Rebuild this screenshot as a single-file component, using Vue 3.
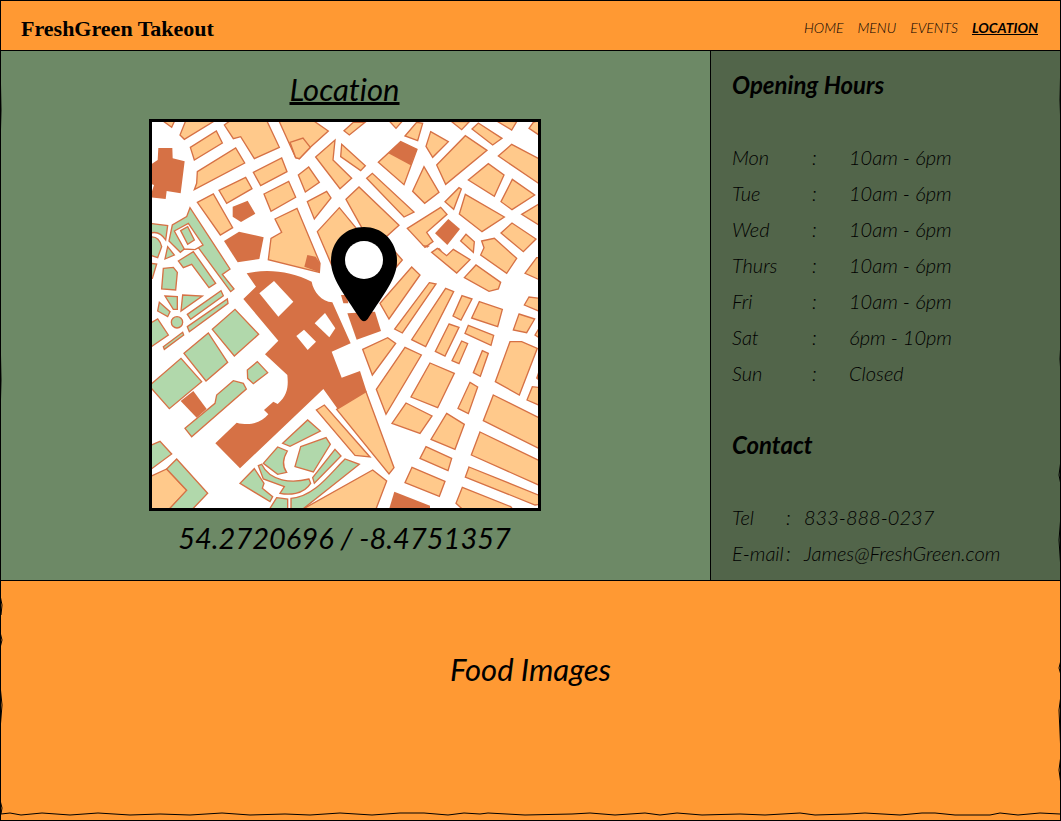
<script setup>
const nav = [
  { label: 'Home', href: '#home' },
  { label: 'Menu', href: '#menu' },
  { label: 'Events', href: '#events' },
  { label: 'Location', href: '#location', current: true },
]
const hours = [
  ['Mon', '10am - 6pm'],
  ['Tue', '10am - 6pm'],
  ['Wed', '10am - 6pm'],
  ['Thurs', '10am - 6pm'],
  ['Fri', '10am - 6pm'],
  ['Sat', '6pm - 10pm'],
  ['Sun', 'Closed'],
]
// City blocks, grouped by map tile
const tiles = [
  {
    at: 'translate(0 0)',
    blocks: [
      '50,15 80,37 90,15', '105,60 118,73 205,20 205,10 125,10', '136,97 214,48 232,84 148,135',
      '157,170 272,99 299,144 148,224 155,205', '238,30 265,10 362,10 403,97 328,131 287,65 265,71',
      '403,20 403,10 495,10 550,48 496,97 463,131 452,128', '435,82 474,69 496,97 463,131 452,128',
      '512,126 570,75 564,135 620,190 585,221', '590,88 661,152 647,167 587,125',
      '325,172 410,129 426,170 347,212', '357,237 431,199 452,247 378,289',
      '460,180 491,156 523,202 481,231', '487,260 545,229 558,249 508,312',
      '222,226 302,187 321,221 245,265', '157,262 205,237 263,338 226,360',
      '390,312 456,280 525,445 523,472 370,434 378,370 410,352', '517,350 583,278 700,420 640,520 560,450',
    ],
    red: [
      '40,99 82,99 83,130 119,139 107,235 65,228 62,252 15,247 27,210 15,205 15,150 38,135',
      '263,275 308,257 331,296 288,321 263,305', '237,378 282,350 356,367 343,432 278,442',
      '487,420 512,425 525,445 523,472 478,455',
    ],
    green: [],
  },
  {
    at: 'translate(585 0)',
    blocks: [
      '12,47 40,22 75,22 28,60', '145,15 190,15 168,40', '195,63 230,22 248,25 233,77',
      '272,50 325,80 278,127 258,94', '335,20 388,20 365,44', '396,42 415,24 486,70 458,90',
      '470,18 530,20 515,45', '567,40 580,22 600,15 600,62', '475,123 515,88 600,133 600,208',
      '290,150 376,62 441,106 317,208', '115,142 182,80 231,103 192,209', '385,195 445,146 492,180 463,244',
      '517,193 584,240 516,284 483,260', '545,298 600,265 600,332', '218,229 252,155 297,232 254,265',
      '80,190 97,175 222,291 192,306', '18,253 57,216 177,331 100,400', '315,260 357,218 364,222 341,283',
      '376,238 493,306 426,350 358,297', '202,340 302,277 321,298 260,352 279,380 255,397',
      '362,378 378,358 403,380 400,412', '483,354 516,324 588,372 550,410',
      '425,378 463,370 530,430 500,475 422,420 432,398',
    ],
    red: ['182,80 231,103 212,151 145,115', '285,355 325,312 360,342 322,390', '288,405 297,398 306,407', '245,390 262,398 270,392'],
    green: [],
  },
  {
    at: 'translate(0 390)',
    blocks: [],
    red: ['588,150 605,150 610,175 595,175', '607,205 690,200 708,258 635,284'],
    green: [
      '15,55 35,57 22,100 15,100', '55,70 85,67 97,82 92,135 50,132',
      '100,48 145,20 212,115 192,128 140,58 115,68', '60,153 97,155 97,193 85,193',
      '113,150 172,153 108,198', '43,172 75,200 68,215 38,198', '127,208 228,137 235,152 137,223',
      '127,245 247,162 249,175 133,260', '55,305 113,262 116,270 58,313', '15,235 38,222 70,270 15,308',
      '202,253 270,193 341,268 268,333', '117,325 190,264 248,352 183,408',
      '15,420 108,340 170,410 73,491 15,425', '307,375 337,350 368,383 325,416 308,400',
      '68,5 88,30 60,42',
    ],
  },
  {
    at: 'translate(585 390)',
    blocks: [
      '275,22 292,10 320,32 340,13 390,44 350,84', '373,98 408,60 482,112 475,132 447,139',
      '555,85 590,38 600,38 600,105', '215,66 240,90 147,222 120,175', '165,20 187,45 170,65',
      '268,113 288,117 187,264 164,252', '317,130 341,140 257,305 215,284', '366,152 396,162 363,225 339,213',
      '418,170 487,193 473,245 395,219', '553,180 567,156 600,160 600,200', '537,207 584,222 560,263 520,255',
      '385,241 461,271 453,301 375,265', '327,237 357,247 315,333 286,319', '365,288 383,296 357,356 336,347',
      '427,317 445,325 421,394 400,383', '585,270 600,245 600,280', '68,313 143,278 167,295 97,390',
      '195,307 244,330 138,508 109,433', '270,354 343,385 293,488 213,456',
      '510,290 545,290 592,310 538,450 466,410',
    ],
    red: ['588,400 600,365 600,410'],
    green: [],
  },
  {
    at: 'translate(0 780)',
    blocks: ['15,305 65,282 125,346 75,400 15,405'],
    red: ['145,48 185,102 155,128 107,78'],
    green: [
      '120,160 210,85 215,60 265,17 295,25 304,42 140,185', '15,212 45,199 80,237 15,285',
      '65,282 95,252 188,355 140,405 70,405 125,346', '413,205 488,135 526,168 435,214',
      '467,215 543,188 556,208 505,291 450,275', '328,281 357,325 352,340 383,365 375,380 285,325',
      '570,223 588,243 508,325 503,308', '395,368 428,372 428,405 375,400',
    ],
  },
  {
    at: 'translate(585 780)',
    blocks: [
      '390,22 413,36 385,116 354,100', '561,75 577,35 600,38 600,92', '460,60 600,130 600,222 430,137',
      '420,171 600,258 600,332 394,240', '387,276 600,362 600,388 585,390 376,306',
      '367,337 512,395 520,405 370,405 348,385', '198,84 276,123 240,175 156,145',
      '320,115 373,148 345,223 273,193', '258,215 335,250 324,287 240,250', '216,277 315,319 298,364 195,323',
      '-10,103 78,50 162,278 147,297', '-71,105 -47,90 90,246 45,241', '98,285 140,318 105,410 -125,410',
    ],
    red: ['163,350 270,392 270,410 145,410'],
    green: [],
  },
]
</script>

<template>
  <div class="page">
    <header class="bar">
      <h1 class="brand">FreshGreen Takeout</h1>
      <nav class="nav" aria-label="Main">
        <a v-for="n in nav" :key="n.label" :href="n.href" :class="{ current: n.current }">{{ n.label }}</a>
      </nav>
    </header>

    <div class="middle">
      <main class="location">
        <h2 class="title">Location</h2>
        <svg class="map" viewBox="21 21 1158 1158" role="img" aria-label="Map with a location pin">
          <rect x="0" y="0" width="1200" height="1200" fill="#fff" />
          <g stroke="#d67145" stroke-width="4">
            <g fill="#b1d8ab">
              <polygon points="135,278 125,305 82,330 72,378 106,412 118,402 160,398 257,530 267,522 232,478 255,462" />
              <polygon points="88,348 130,325 174,390 150,404 118,402" fill="#fff" />
              <polygon points="107,347 128,335 148,375 128,388" />
              <path d="M15,325L68,332L62,375Q42,345 15,355Z" />
              <path d="M15,366Q42,362 50,395L38,428L15,420Z" />
              <circle cx="96" cy="622" r="17" />
              <path d="M355,1045L398,996L427,1008Q405,1045 425,1072L398,1078Z" />
              <path d="M340,1052L350,1048C375,1100 440,1105 492,1092L497,1105C475,1140 430,1140 405,1135L418,1115L355,1092Z" />
              <path d="M438,1150C510,1145 560,1070 600,1032L643,1048L470,1185L438,1185Z" />
            </g>
            <path
              fill="#d67145"
              d="M305,475C370,460 440,470 500,500C505,530 530,560 562,562L617,685L560,710L590,788L645,768L665,830L578,882L535,822L285,1060L211,985L275,923C320,935 350,920 370,898L357,885L385,860L398,867C430,840 430,810 427,780L360,718L400,677L295,552L333,515Z"
              stroke="none"
            />
            <g fill="#fff" stroke="none">
              <polygon points="343,535 387,498 445,560 400,605" />
              <polygon points="509,625 540,594 571,640 553,667" />
              <polygon points="454,663 477,644 513,680 488,705" />
            </g>
            <g v-for="t in tiles" :key="t.at" :transform="t.at">
              <polygon v-for="p in t.blocks" :key="p" :points="p" fill="#ffc98b" />
              <polygon v-for="p in t.green" :key="p" :points="p" fill="#b1d8ab" />
              <polygon v-for="p in t.red" :key="p" :points="p" fill="#d67145" stroke="none" />
            </g>
          </g>
          <path d="M657,336C714,336 756,380 756,437C756,490 720,532 668,612Q657,626 646,612C594,532 558,490 558,437C558,380 600,336 657,336Z" />
          <circle cx="657" cy="435" r="57" fill="#fff" />
        </svg>
        <p class="coords">54.2720696 / -8.4751357</p>
      </main>

      <aside class="info">
        <h2>Opening Hours</h2>
        <table class="hours">
          <tbody>
            <tr v-for="h in hours" :key="h[0]">
              <th scope="row">{{ h[0] }}</th>
              <td>:</td>
              <td>{{ h[1] }}</td>
            </tr>
          </tbody>
        </table>
        <h2>Contact</h2>
        <table class="contact">
          <tbody>
            <tr>
              <th scope="row">Tel</th>
              <td>:</td>
              <td><a href="tel:8338880237">833-888-0237</a></td>
            </tr>
            <tr>
              <th scope="row">E-mail</th>
              <td>:</td>
              <td><a href="mailto:James@FreshGreen.com">James@FreshGreen.com</a></td>
            </tr>
          </tbody>
        </table>
      </aside>
    </div>

    <section class="food">
      <h2>Food Images</h2>
    </section>

    <svg class="rough" viewBox="0 0 1061 821" preserveAspectRatio="none" aria-hidden="true">
      <path d="M1,814L10,813L21,815L42,813L70,815L98,813L130,815L160,814L190,815L222,813L250,815L285,814L310,815L340,813L372,815L400,813L424,813L448,815L464,813L480,814L488,813L525,815L572,814L590,813L615,815L645,813L660,815L677,813L702,815L740,814L765,815L800,813L815,815L848,814L865,813L900,815L922,813L935,813L955,815L990,815L1000,813L1018,815L1040,813L1060,814" />
      <path d="M0,58L1,110L0,150M0,330L1,380L0,420M0,595L2,605L1,615M0,632L2,640L0,648M0,685L2,705L0,730M0,800L2,808L1,814" />
      <path d="M1061,55L1060,100L1061,130M1061,340L1060,359L1061,375M1061,460L1059,475L1061,485M1061,515L1059,540L1061,570M1061,660L1059,668L1061,675M1061,695L1059,710L1061,755L1059,770L1061,785" />
    </svg>
  </div>
</template>

<style>
body {
  margin: 0;
}
</style>

<style scoped>
.page {
  position: relative;
  box-sizing: border-box;
  min-height: 100vh;
  display: flex;
  flex-direction: column;
  border: 1px solid #000;
  background: #ff9933;
  color: #000;
  font-family: Lato, "Open Sans", sans-serif;
  font-style: italic;
  font-weight: 300;
  font-variant-ligatures: none;
}
h1,
h2,
p {
  margin: 0;
}
a {
  color: inherit;
  text-decoration: none;
}
.bar {
  display: flex;
  align-items: center;
  justify-content: space-between;
  height: 49px;
  padding: 0 22px 0 20px;
  border-bottom: 1px solid #000;
}
.brand {
  padding-top: 6px;
  font: bold 22px/26px "Liberation Serif", serif;
}
.nav {
  display: flex;
  gap: 14px;
  padding-top: 4px;
  font-size: 14px;
  line-height: 20px;
  text-transform: uppercase;
}
.nav .current {
  font-weight: 700;
  text-decoration: underline;
}
.middle {
  display: grid;
  grid-template-columns: 709fr 350fr;
  border-bottom: 1px solid #000;
}
.location {
  display: flex;
  flex-direction: column;
  align-items: center;
  padding: 18px 22px 22px 0;
  background: #6d8966;
}
.title {
  font-size: 31px;
  font-weight: 400;
  line-height: 40px;
  margin-bottom: 10px;
  text-decoration: underline;
  text-decoration-thickness: 3px;
  text-underline-offset: 1px;
  text-decoration-skip-ink: none;
}
.map {
  display: block;
  width: 386px;
  max-width: 100%;
  border: 3px solid #000;
}
.coords {
  margin-top: 7px;
  font-size: 29px;
  font-weight: 400;
  line-height: 40px;
}
.info {
  padding: 18px 20px 0 21px;
  border-left: 1px solid #000;
  background: #52654a;
  font-size: 20px;
}
.info h2 {
  font-size: 24px;
  font-weight: 700;
  line-height: 32px;
}
table {
  border-collapse: collapse;
  line-height: 36px;
}
th,
td {
  padding: 0;
  font-weight: 300;
  text-align: left;
}
.hours {
  margin: 38px 0;
}
.hours th {
  width: 80px;
}
.hours td:nth-child(2) {
  width: 37px;
}
.contact {
  margin-top: 38px;
}
.contact th {
  width: 54px;
}
.contact td:nth-child(2) {
  width: 18px;
}
.food {
  flex: 1;
  padding-top: 68px;
  text-align: center;
}
.food h2 {
  font-size: 31px;
  font-weight: 400;
  line-height: 40px;
}
.rough {
  position: absolute;
  inset: -1px;
  width: calc(100% + 2px);
  height: calc(100% + 2px);
  fill: none;
  stroke: #000;
  stroke-width: 1;
  pointer-events: none;
}
</style>
